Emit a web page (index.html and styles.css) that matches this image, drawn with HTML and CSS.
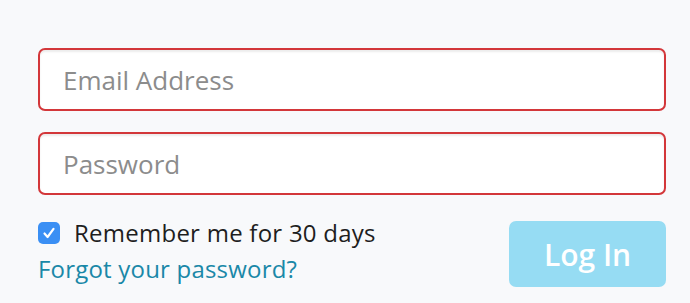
FILE: index.html
```html
<!DOCTYPE html>
<html lang="en">
<head>
    <meta charset="UTF-8">
    <meta name="viewport" content="width=device-width, initial-scale=1.0">
    <title>Log In</title>
    <link rel="stylesheet" href="styles.css">
</head>
<body>
    <form class="login-form">
        <input class="field" type="email" placeholder="Email Address">
        <input class="field" type="password" placeholder="Password">

        <div class="form-footer">
            <div class="form-options">
                <label class="remember">
                    <span class="check-box">
                        <svg width="14" height="14" viewBox="0 0 14 14">
                            <path d="M2.5 7.5 L5.6 11 L11.5 2.8" fill="none" stroke="#fff" stroke-width="2.2" stroke-linecap="round" stroke-linejoin="round"/>
                        </svg>
                    </span>
                    Remember me for 30 days
                </label>
                <a class="forgot" href="#">Forgot your password?</a>
            </div>
            <button class="login-btn" type="button">Log In</button>
        </div>
    </form>
</body>
</html>
```

FILE: styles.css
```css
:root {
    --error-color: #d3373a;
    --link-color: #1a88a8;
    --button-color: #96dcf3;
    --page-bg: #f8f9fb;
}

* {
    box-sizing: border-box;
    margin: 0;
    padding: 0;
}

body {
    font-family: 'Open Sans', 'Liberation Sans', sans-serif;
    background: var(--page-bg);
    color: #222;
}

.login-form {
    width: 628px;
    margin: 48px 0 0 38px;
    display: flex;
    flex-direction: column;
}

.field {
    height: 63px;
    margin-bottom: 21px;
    padding: 0 23px;
    border: 2px solid var(--error-color);
    border-radius: 7px;
    background: #fff;
    box-shadow: inset 0 2px 2px rgba(0, 0, 0, 0.08);
    font-family: inherit;
    font-size: 26px;
    color: #333;
    outline: none;
}

.field::placeholder {
    color: #8c8c8c;
}

.form-footer {
    display: flex;
    justify-content: space-between;
    align-items: flex-start;
    margin-top: 5px;
}

.form-options {
    display: flex;
    flex-direction: column;
}

.remember {
    display: flex;
    align-items: center;
    gap: 14px;
    font-size: 24px;
    line-height: 24px;
    letter-spacing: 0.25px;
    color: #1e1e1e;
}

.check-box {
    width: 22px;
    height: 22px;
    border-radius: 5px;
    background: #3a8ff4;
    display: flex;
    align-items: center;
    justify-content: center;
}

.forgot {
    margin-top: 10px;
    font-size: 24px;
    line-height: 28px;
    letter-spacing: 0.2px;
    color: var(--link-color);
    text-decoration: none;
}

.login-btn {
    width: 157px;
    height: 66px;
    border: none;
    border-radius: 7px;
    background: var(--button-color);
    color: #fff;
    font-family: inherit;
    font-size: 30px;
    font-weight: 600;
}
```
